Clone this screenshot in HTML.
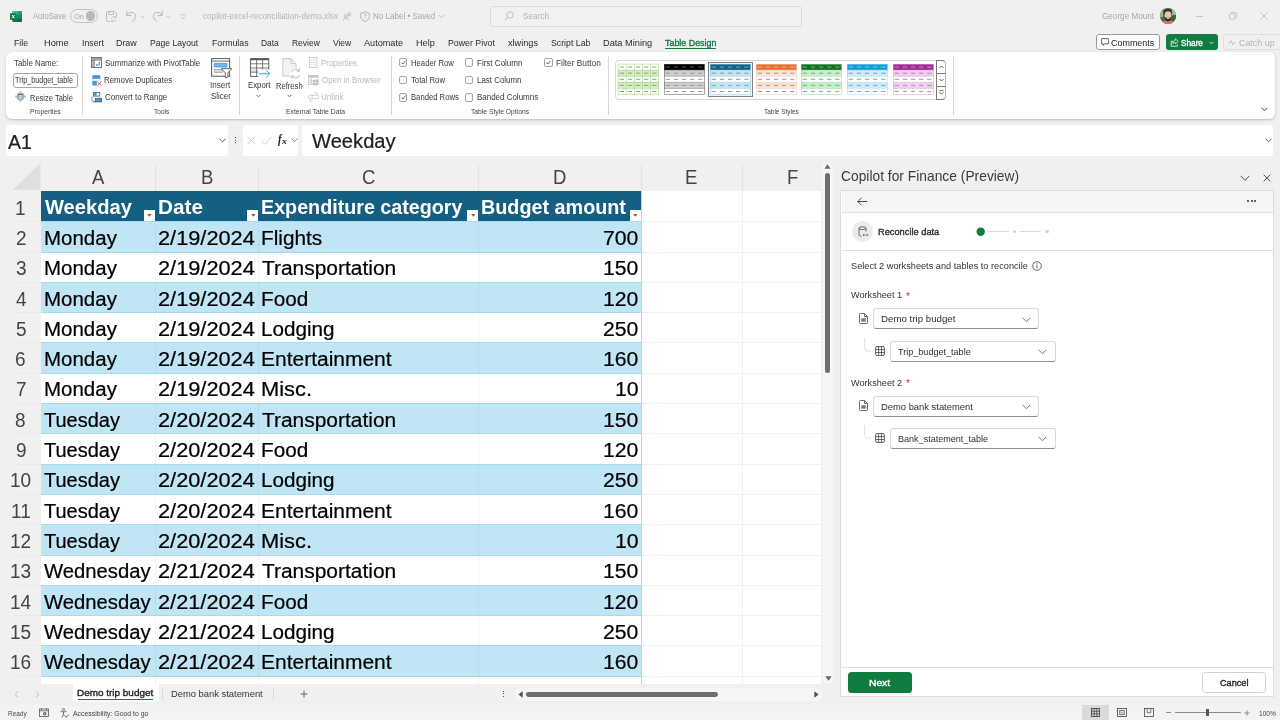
<!DOCTYPE html>
<html lang="en"><head><meta charset="utf-8"><title>copilot-excel-reconciliation-demo.xlsx - Excel</title>
<style>
html,body{margin:0;padding:0}
body{width:1280px;height:720px;overflow:hidden;background:#f0f0f0;position:relative;font-family:"Liberation Sans",sans-serif}
#root{position:absolute;left:0;top:0;width:1280px;height:720px;filter:contrast(1)}
.b{position:absolute;display:block}
.ct{-webkit-text-stroke:.22px currentColor}
.sb{-webkit-text-stroke:.35px currentColor}
.t{position:absolute;display:block;white-space:nowrap;line-height:1;transform-origin:0 0}
</style></head>
<body>
<div id="root">
<svg class="b" style="left:10px;top:10.5px;" width="12" height="11" viewBox="0 0 12 11"><rect x="2.5" y="0" width="9.5" height="11" rx="1" fill="#21a366"/>
<rect x="2.5" y="0" width="9.5" height="3.6" fill="#33c481" rx="1"/><rect x="2.5" y="7.4" width="9.5" height="3.6" fill="#107c41" rx="1"/>
<rect x="7.2" y="0" width="4.8" height="11" fill="#185c37" opacity=".35"/>
<rect x="0" y="2.3" width="6.6" height="6.6" rx=".8" fill="#107c41"/>
<path d="M2 4 L4.6 7.3 M4.6 4 L2 7.3" stroke="#fff" stroke-width="1" fill="none"/></svg>
<span class="t" style="left:32.70px;top:13.00px;font-size:8.2px;color:#a6a6a6;transform:scaleX(0.9352)">AutoSave</span>
<div class="b" style="left:69.7px;top:9.2px;width:28px;height:13.500px;border:1px solid #c2c2c2;border-radius:7px;box-sizing:border-box"></div>
<span class="t" style="left:73.87px;top:13.00px;font-size:7.2px;color:#a6a6a6;transform:scaleX(1.0317)">On</span>
<div class="b" style="left:86.3px;top:11.4px;width:9.2px;height:9.2px;background:#b8b8b8;border-radius:50%"></div>
<svg class="b" style="left:106px;top:11px;" width="11" height="11" viewBox="0 0 11 11"><path d="M.5 1.5a1 1 0 0 1 1-1h7l2 2v3M.5 1.5v8a1 1 0 0 0 1 1h2.5M2.8.5v3h4.8v-3" fill="none" stroke="#b9b9b9" stroke-width=".9"/><path d="M5.5 7.5a2.3 2.3 0 0 1 4.2-1M10 8.8a2.3 2.3 0 0 1-4.2 1M9.9 5v1.7H8.2M5.6 11V9.4h1.7" fill="none" stroke="#b9b9b9" stroke-width=".8"/></svg>
<svg class="b" style="left:125.5px;top:10px;" width="11" height="12" viewBox="0 0 11 12"><path d="M.8 1.2v4.2h4.2M1 5.2C2.5 2.6 5.5 1.6 7.8 3c2.2 1.4 2.5 4.2 1 6L6 11.5" fill="none" stroke="#b5b5b5" stroke-width="1" stroke-linecap="round" stroke-linejoin="round"/></svg>
<svg class="b" style="left:140px;top:14.5px;" width="5" height="4" viewBox="0 0 5 4"><path d="M.5 .8L2.5 2.8L4.5 .8" fill="none" stroke="#b5b5b5" stroke-width=".8"/></svg>
<svg class="b" style="left:152px;top:10px;" width="11" height="12" viewBox="0 0 11 12"><path d="M10.2 1.2v4.2H6M10 5.2C8.5 2.6 5.5 1.6 3.2 3C1 4.400.7 7.200 2.200 9L5 11.500" fill="none" stroke="#b5b5b5" stroke-width="1" stroke-linecap="round" stroke-linejoin="round"/></svg>
<svg class="b" style="left:166px;top:14.5px;" width="5" height="4" viewBox="0 0 5 4"><path d="M.5 .8L2.5 2.8L4.5 .8" fill="none" stroke="#b5b5b5" stroke-width=".8"/></svg>
<svg class="b" style="left:179.5px;top:13.5px;" width="6" height="6" viewBox="0 0 6 6"><path d="M.5 .8h5" stroke="#b5b5b5" stroke-width=".8"/><path d="M1 2.800L3 4.800L5 2.800" fill="none" stroke="#b5b5b5" stroke-width=".8"/></svg>
<span class="t" style="left:202.57px;top:13.00px;font-size:8.2px;color:#b4b4b4;transform:scaleX(0.9969)">copilot-excel-reconciliation-demo.xlsx</span>
<svg class="b" style="left:343px;top:12px;" width="8" height="9" viewBox="0 0 8 9"><circle cx="3" cy="4" r="1.500" fill="none" stroke="#a8a8a8" stroke-width=".7"/><path d="M.4 8.500c0-1.600 1.200-2.400 2.600-2.400s2.600.8 2.600 2.400" fill="none" stroke="#a8a8a8" stroke-width=".7"/><path d="M5.600 .8v3.600M5.600 .8h1.200a.9.900 0 0 1 0 1.800h-1.200M6.600 2.600l1 1.800" fill="none" stroke="#a8a8a8" stroke-width=".6"/></svg>
<svg class="b" style="left:359.5px;top:11px;" width="10" height="11" viewBox="0 0 10 11"><path d="M5 .6C6.200 1.600 7.800 2 9.300 2v3.500c0 2.500-1.800 4.200-4.300 5C2.500 9.700.7 8 .7 5.500V2C2.200 2 3.800 1.600 5 .6z" fill="none" stroke="#a8a8a8" stroke-width=".8"/><path d="M3.800 4.200a1.200 1.200 0 1 1 1.800 1c-.4.300-.6.500-.6 1M5 7.400v.6" fill="none" stroke="#a8a8a8" stroke-width=".7"/></svg>
<span class="t" style="left:372.56px;top:13.00px;font-size:8.2px;color:#a6a6a6;transform:scaleX(0.9820)">No Label • Saved</span>
<svg class="b" style="left:437.5px;top:14px;" width="7" height="5" viewBox="0 0 7 5"><path d="M.5 .8L3.500 3.800L6.500 .8" fill="none" stroke="#b0b0b0" stroke-width=".8"/></svg>
<div class="b" style="left:489.5px;top:5.5px;width:312px;height:21px;border:1px solid #dcdcdc;border-radius:3px;box-sizing:border-box;background:#f1f1f1"></div>
<svg class="b" style="left:504px;top:11px;" width="10" height="10" viewBox="0 0 10 10"><circle cx="6" cy="4" r="3.200" fill="none" stroke="#b0b0b0" stroke-width=".8"/><path d="M3.700 6.300L.6 9.400" stroke="#b0b0b0" stroke-width=".8"/></svg>
<span class="t" style="left:522.83px;top:13.00px;font-size:8.2px;color:#b2b2b2;transform:scaleX(1.0059)">Search</span>
<span class="t" style="left:1102.29px;top:13.00px;font-size:8.2px;color:#a6a6a6;transform:scaleX(0.9952)">George Mount</span>
<svg class="b" style="left:1160px;top:8px;" width="16" height="16" viewBox="0 0 16 16"><defs><clipPath id="av"><circle cx="8" cy="8" r="8"/></clipPath></defs>
<g clip-path="url(#av)"><rect width="16" height="16" fill="#3e7040"/><rect x="0" y="3" width="3" height="6" fill="#a9b86a"/><rect x="11.500" y="2" width="5" height="5" fill="#9fc0a8"/><rect x="11" y="7" width="5" height="6" fill="#2f6a33"/>
<ellipse cx="8" cy="5" rx="4.300" ry="4" fill="#3b2c25"/><ellipse cx="8" cy="7.400" rx="3.500" ry="4.200" fill="#e6c3ae"/>
<path d="M4.400 8.300c.2 3.600 1.900 4.900 3.600 4.900s3.400-1.300 3.600-4.900c-.8 1.300-1.600 1.700-2.200 1.500-.9-.4-1.900-.4-2.800 0-.6.200-1.400-.2-2.200-1.500z" fill="#33241d"/>
<ellipse cx="8" cy="10.200" rx="1.500" ry=".7" fill="#f4e6dc"/>
<path d="M1.500 16c.5-2.800 2.500-3.400 4-3.600l2.500 1.400 2.500-1.400c1.500.2 3.500.8 4 3.600z" fill="#f26b57"/></g></svg>
<div class="b" style="left:1196px;top:15.5px;width:7px;height:0.8px;background:#c4c4c4"></div>
<svg class="b" style="left:1228.5px;top:12px;" width="8" height="8" viewBox="0 0 8 8"><rect x=".5" y="1.900" width="5.400" height="5.400" rx="1" fill="none" stroke="#bdbdbd" stroke-width=".8"/><path d="M2 1.900V1.500a1 1 0 0 1 1-1h3.500a1 1 0 0 1 1 1v3.500a1 1 0 0 1-1 1h-.4" fill="none" stroke="#bdbdbd" stroke-width=".8"/></svg>
<svg class="b" style="left:1260px;top:12px;" width="8" height="8" viewBox="0 0 8 8"><path d="M.5 .5l7 7M7.500 .5l-7 7" stroke="#bdbdbd" stroke-width=".8"/></svg>
<span class="t" style="left:13.90px;top:38.00px;font-size:9.5px;color:#2b2b2b;transform:scaleX(0.9215)">File</span>
<span class="t" style="left:44.06px;top:38.00px;font-size:9.5px;color:#2b2b2b;transform:scaleX(0.9697)">Home</span>
<span class="t" style="left:81.51px;top:38.00px;font-size:9.5px;color:#2b2b2b;transform:scaleX(0.9191)">Insert</span>
<span class="t" style="left:116.09px;top:38.00px;font-size:9.5px;color:#2b2b2b;transform:scaleX(0.9336)">Draw</span>
<span class="t" style="left:150.11px;top:38.00px;font-size:9.5px;color:#2b2b2b;transform:scaleX(0.9023)">Page Layout</span>
<span class="t" style="left:211.50px;top:38.00px;font-size:9.5px;color:#2b2b2b;transform:scaleX(0.9241)">Formulas</span>
<span class="t" style="left:261.03px;top:38.00px;font-size:9.5px;color:#2b2b2b;transform:scaleX(0.8867)">Data</span>
<span class="t" style="left:292.02px;top:38.00px;font-size:9.5px;color:#2b2b2b;transform:scaleX(0.8914)">Review</span>
<span class="t" style="left:332.66px;top:38.00px;font-size:9.5px;color:#2b2b2b;transform:scaleX(0.8882)">View</span>
<span class="t" style="left:364.20px;top:38.00px;font-size:9.5px;color:#2b2b2b;transform:scaleX(0.9594)">Automate</span>
<span class="t" style="left:415.97px;top:38.00px;font-size:9.5px;color:#2b2b2b;transform:scaleX(0.9574)">Help</span>
<span class="t" style="left:447.50px;top:38.00px;font-size:9.5px;color:#2b2b2b;transform:scaleX(0.9243)">Power Pivot</span>
<span class="t" style="left:508.11px;top:38.00px;font-size:9.5px;color:#2b2b2b;transform:scaleX(0.9631)">xlwings</span>
<span class="t" style="left:550.81px;top:38.00px;font-size:9.5px;color:#2b2b2b;transform:scaleX(0.9203)">Script Lab</span>
<span class="t" style="left:603.16px;top:38.00px;font-size:9.5px;color:#2b2b2b;transform:scaleX(0.9715)">Data Mining</span>
<span class="t sb" style="left:665.02px;top:38.00px;font-size:9.5px;color:#107c41;transform:scaleX(0.9353)">Table Design</span>
<div class="b" style="left:665px;top:47.6px;width:51px;height:1.6px;background:#107c41;border-radius:1px"></div>
<div class="b" style="left:1095.5px;top:34.3px;width:64px;height:15.400px;border:1px solid #999;border-radius:3px;box-sizing:border-box;background:#fff"></div>
<svg class="b" style="left:1101px;top:38px;" width="8" height="8" viewBox="0 0 8 8"><path d="M1 .6h6a.6.600 0 0 1 .6.600v4a.6.600 0 0 1-.6.600H3.800L2 7.400V5.800H1a.6.600 0 0 1-.6-.6v-4A.6.600 0 0 1 1 .6z" fill="none" stroke="#333" stroke-width=".8"/></svg>
<span class="t" style="left:1111.05px;top:39.00px;font-size:9.2px;color:#222;transform:scaleX(0.9748)">Comments</span>
<div class="b" style="left:1165.5px;top:34.3px;width:52px;height:15.400px;border-radius:3px;background:#107c41"></div>
<svg class="b" style="left:1170px;top:37.5px;" width="9" height="9" viewBox="0 0 9 9"><path d="M3 3.200H1.200v5h6.200V6.500" fill="none" stroke="#fff" stroke-width=".8"/><path d="M5.300 .8L8.200 3.300L5.300 5.800V4.300C3.900 4.300 3.200 4.900 2.700 5.800C2.800 3.800 3.700 2.500 5.300 2.300z" fill="none" stroke="#fff" stroke-width=".7" stroke-linejoin="round"/></svg>
<span class="t sb" style="left:1181.23px;top:39.00px;font-size:9.2px;color:#fff;transform:scaleX(0.8949)">Share</span>
<svg class="b" style="left:1209px;top:40.5px;" width="5" height="4" viewBox="0 0 5 4"><path d="M.5 .8L2.500 2.800L4.500 .8" fill="none" stroke="#fff" stroke-width=".8"/></svg>
<div class="b" style="left:1223px;top:34.3px;width:60px;height:15.400px;border:1px solid #dedede;border-radius:3px;box-sizing:border-box"></div>
<svg class="b" style="left:1228px;top:38.5px;" width="8" height="7" viewBox="0 0 8 7"><path d="M.4 3.800h1.600l1.200-2.400 1.600 4.200 1.100-1.800h1.700" fill="none" stroke="#b5b5b5" stroke-width=".7"/></svg>
<span class="t" style="left:1238.75px;top:39.00px;font-size:9.2px;color:#b3b3b3;transform:scaleX(0.9674)">Catch up</span>
<div class="b" style="left:5.5px;top:51.5px;width:1269.5px;height:67px;background:#fff;border-radius:6px;box-shadow:0 1px 2.500px rgba(0,0,0,.22)"></div>
<span class="t" style="left:13.94px;top:59.00px;font-size:8.5px;color:#383838;transform:scaleX(0.9262)">Table Name:</span>
<div class="b" style="left:13px;top:72.500px;width:64.500px;height:15px;border:1px solid #a6a6a6;border-radius:3px;box-sizing:border-box;background:#fff"></div>
<span class="t" style="left:15.46px;top:77.00px;font-size:8.2px;color:#383838;transform:scaleX(0.8825)">Trip_budget_table</span>
<svg class="b" style="left:15.4px;top:91.1px;" width="11" height="11" viewBox="0 0 11 11"><rect x="2.500" y="2.500" width="6" height="6" fill="#6a6a6a"/><rect x="3.400" y="4.300" width="4.200" height="1.300" fill="#fff"/><rect x="3.400" y="6.300" width="4.200" height="1.300" fill="#fff"/><rect x="4.500" y=".3" width="2" height="2" fill="#7cc0ee"/><rect x="4.500" y="8.700" width="2" height="2" fill="#7cc0ee"/><rect x=".2" y="4.500" width="2" height="2" fill="#7cc0ee"/><rect x="8.800" y="4.500" width="2" height="2" fill="#7cc0ee"/></svg>
<span class="t" style="left:29.70px;top:94.00px;font-size:8.5px;color:#383838;transform:scaleX(0.8834)">Resize Table</span>
<span class="t" style="left:30.06px;top:108.00px;font-size:7.4px;color:#444;transform:scaleX(0.9120)">Properties</span>
<div class="b" style="left:82.3px;top:55.6px;width:0.8px;height:59px;background:#d8d8d8"></div>
<svg class="b" style="left:91px;top:57px;" width="11" height="11" viewBox="0 0 11 11"><rect x=".5" y=".5" width="10" height="10" fill="#fff" stroke="#666" stroke-width=".9"/><rect x="1" y="1" width="9" height="2" fill="#a8a8a8"/><rect x="1" y="1" width="2.200" height="9" fill="#b5b5b5"/><path d="M3.400 .8v9.400M.8 3.300h9.400" stroke="#666" stroke-width=".6"/><path d="M5.400 8h3V5.200" fill="none" stroke="#2b88d8" stroke-width=".9"/><path d="M7.300 5.600l1.100-1.200 1.100 1.200zM6 6.900L4.800 8 6 9.100z" fill="#2b88d8"/></svg>
<span class="t" style="left:104.74px;top:59.00px;font-size:8.5px;color:#383838;transform:scaleX(0.9331)">Summarize with PivotTable</span>
<svg class="b" style="left:92px;top:74.5px;" width="10" height="11" viewBox="0 0 10 11"><rect x=".3" y=".3" width="8" height="10.200" rx=".8" fill="#3a96dd"/><rect x=".3" y="3.400" width="8" height="2.800" fill="#fff"/><path d="M.3 3.400h8M.3 6.200h8" stroke="#1f6fb5" stroke-width=".5"/><rect x="4.800" y="5.800" width="5.200" height="5.200" fill="#fff"/><path d="M5.400 6.600l4 4M9.400 6.600l-4 4" stroke="#e8453c" stroke-width="1"/></svg>
<span class="t" style="left:104.47px;top:76.00px;font-size:8.5px;color:#383838;transform:scaleX(0.9255)">Remove Duplicates</span>
<svg class="b" style="left:91px;top:92px;" width="11" height="11" viewBox="0 0 11 11"><rect x="2.400" y=".5" width="6.400" height="3.600" fill="#fff" stroke="#555" stroke-width=".8"/><rect x="2.800" y=".9" width="2.800" height="2.800" fill="#3a96dd"/><rect x="4.400" y="6.300" width="6.200" height="3.600" fill="#3a96dd" stroke="#555" stroke-width=".8"/><path d="M3.600 9.800C1.500 9.600.3 8 .8 6.200 1.100 5 2 4.400 2.800 4.300M2.600 8.600l1.200 1.200-1.200 1.200" fill="none" stroke="#2b88d8" stroke-width=".9"/></svg>
<span class="t" style="left:104.70px;top:93.00px;font-size:8.5px;color:#383838;transform:scaleX(0.9348)">Convert to Range</span>
<span class="t" style="left:154.27px;top:108.00px;font-size:7.4px;color:#444;transform:scaleX(0.8890)">Tools</span>
<svg class="b" style="left:211px;top:57.5px;" width="22" height="21" viewBox="0 0 22 21"><rect x=".6" y=".6" width="18" height="17.600" fill="#fff" stroke="#5a5a5a" stroke-width="1"/><path d="M.6 3.100h18" stroke="#5a5a5a" stroke-width=".9"/><rect x="3.200" y="5.400" width="12.800" height="3.600" rx=".5" fill="#74b6ee" stroke="#2b88d8" stroke-width=".7"/><rect x="3.200" y="11.300" width="8" height="3" fill="#d6d6d6" stroke="#8a8a8a" stroke-width=".6"/><path d="M10.400 10.600h10.400l-3.900 4.300v4l-2.600 1v-5z" fill="#fff" stroke="#5a5a5a" stroke-width=".9" stroke-linejoin="round"/></svg>
<span class="t" style="left:210.47px;top:81.00px;font-size:8.5px;color:#383838;transform:scaleX(0.9490)">Insert</span>
<span class="t" style="left:210.84px;top:92.00px;font-size:8.5px;color:#383838;transform:scaleX(0.9354)">Slicer</span>
<div class="b" style="left:239.2px;top:55.6px;width:0.8px;height:59px;background:#d8d8d8"></div>
<svg class="b" style="left:250px;top:57.5px;" width="21" height="21" viewBox="0 0 21 21"><rect x=".6" y=".6" width="18.200" height="17.800" fill="#fff" stroke="#555" stroke-width=".9"/><path d="M.6 1.500h18.200" stroke="#555" stroke-width="1.400"/><rect x="1" y="11.500" width="17.400" height="2.200" fill="#dedede"/><path d="M.6 5.800h18.200M.6 10h18.200M.6 14.200h18.200M6.600 2v16.400M12.600 2v16.400" stroke="#555" stroke-width=".75"/><rect x="8.300" y="11.600" width="12.700" height="8" fill="#fff"/><path d="M8.800 15.800h10.600M16.200 12.200l3.600 3.600-3.600 3.600" fill="none" stroke="#3a9ee6" stroke-width="1"/></svg>
<span class="t" style="left:248.18px;top:81.00px;font-size:8.5px;color:#383838;transform:scaleX(0.9160)">Export</span>
<svg class="b" style="left:256px;top:93.5px;" width="5" height="4" viewBox="0 0 5 4"><path d="M.5 .8L2.500 2.800L4.500 .8" fill="none" stroke="#444" stroke-width=".8"/></svg>
<svg class="b" style="left:281.5px;top:57.5px;" width="20" height="21" viewBox="0 0 20 21"><path d="M.8 .6h8.200l5 5v12.500H.8z" fill="#f3f3f3" stroke="#c6c6c6" stroke-width=".9"/><path d="M9 .6v5h5" fill="none" stroke="#c6c6c6" stroke-width=".9"/><circle cx="13.500" cy="15.600" r="5.600" fill="#fff"/><path d="M9.400 14.200a4.300 4.300 0 0 1 7.600-1.300M17.600 17a4.300 4.300 0 0 1-7.600 1.300" fill="none" stroke="#bdbdbd" stroke-width="1"/><path d="M17.400 10.400v2.800h-2.800M9.600 20.800V18h2.800" fill="none" stroke="#bdbdbd" stroke-width="1"/></svg>
<span class="t" style="left:276.29px;top:82.00px;font-size:8.5px;color:#383838;transform:scaleX(0.8942)">Refresh</span>
<svg class="b" style="left:286.5px;top:94px;" width="5" height="4" viewBox="0 0 5 4"><path d="M.5 .8L2.500 2.800L4.500 .8" fill="none" stroke="#444" stroke-width=".8"/></svg>
<svg class="b" style="left:309px;top:56.7px;" width="9" height="11" viewBox="0 0 9 11"><rect x=".5" y=".5" width="7.500" height="10" fill="#fff" stroke="#c2c2c2" stroke-width=".8"/><path d="M2 3h1.200M4.200 3h2.300M2 5.500h1.200M4.200 5.500h2.300M2 8h1.200M4.200 8h2.300" stroke="#c2c2c2" stroke-width=".8"/></svg>
<span class="t" style="left:321.47px;top:59.00px;font-size:8.5px;color:#bababa;transform:scaleX(0.9290)">Properties</span>
<svg class="b" style="left:307.8px;top:74.5px;" width="11" height="11" viewBox="0 0 11 11"><rect x=".5" y=".5" width="9.500" height="9" fill="#fff" stroke="#c2c2c2" stroke-width=".8"/><rect x=".5" y=".5" width="9.500" height="2.200" fill="#c8c8c8"/><path d="M.5 5h4M.5 7.300h3.500M3.300 2.700v6.800" stroke="#c2c2c2" stroke-width=".7"/><circle cx="7.600" cy="7.600" r="3" fill="#bbb"/><path d="M4.600 7.600h6M7.600 4.600v6" stroke="#fff" stroke-width=".5"/></svg>
<span class="t" style="left:321.74px;top:76.00px;font-size:8.5px;color:#bababa;transform:scaleX(0.9319)">Open in Browser</span>
<svg class="b" style="left:307.8px;top:91.2px;" width="11" height="12" viewBox="0 0 11 12"><rect x=".5" y="4.200" width="6" height="3.500" rx="1.700" fill="none" stroke="#c2c2c2" stroke-width=".8"/><rect x="4" y="4.200" width="6.500" height="3.500" rx="1.700" fill="#fff" stroke="#c2c2c2" stroke-width=".8"/><path d="M6.800 .5l.4 2M9.200 1.200l-1 1.800M10.800 3l-1.700 1M2.300 8.500l-.6 2.500M3.800 8.800v2" stroke="#c2c2c2" stroke-width=".7"/></svg>
<span class="t" style="left:321.49px;top:93.00px;font-size:8.5px;color:#bababa;transform:scaleX(0.9525)">Unlink</span>
<span class="t" style="left:285.86px;top:108.00px;font-size:7.4px;color:#444;transform:scaleX(0.9176)">External Table Data</span>
<div class="b" style="left:390.5px;top:55.6px;width:0.8px;height:59px;background:#d8d8d8"></div>
<div class="b" style="left:398.5px;top:58.3px;width:8.700px;height:8.700px;border:1px solid #a3a3a3;border-radius:2px;box-sizing:border-box;background:#fff"></div>
<svg class="b" style="left:398.5px;top:58.3px;" width="9" height="9" viewBox="0 0 9 9"><path d="M2.300 4.500L3.800 6L6.600 2.800" fill="none" stroke="#333" stroke-width=".8"/></svg>
<span class="t" style="left:410.58px;top:59.00px;font-size:8.5px;color:#383838;transform:scaleX(0.9060)">Header Row</span>
<div class="b" style="left:398.5px;top:75.6px;width:8.700px;height:8.700px;border:1px solid #a3a3a3;border-radius:2px;box-sizing:border-box;background:#fff"></div>
<span class="t" style="left:410.85px;top:76.00px;font-size:8.5px;color:#383838;transform:scaleX(0.9116)">Total Row</span>
<div class="b" style="left:398.5px;top:93px;width:8.700px;height:8.700px;border:1px solid #a3a3a3;border-radius:2px;box-sizing:border-box;background:#fff"></div>
<svg class="b" style="left:398.5px;top:93px;" width="9" height="9" viewBox="0 0 9 9"><path d="M2.300 4.500L3.800 6L6.600 2.800" fill="none" stroke="#333" stroke-width=".8"/></svg>
<span class="t" style="left:410.59px;top:93.00px;font-size:8.5px;color:#383838;transform:scaleX(0.9031)">Banded Rows</span>
<div class="b" style="left:464.7px;top:58.3px;width:8.700px;height:8.700px;border:1px solid #a3a3a3;border-radius:2px;box-sizing:border-box;background:#fff"></div>
<span class="t" style="left:476.56px;top:59.00px;font-size:8.5px;color:#383838;transform:scaleX(0.9442)">First Column</span>
<div class="b" style="left:464.7px;top:75.6px;width:8.700px;height:8.700px;border:1px solid #a3a3a3;border-radius:2px;box-sizing:border-box;background:#fff"></div>
<span class="t" style="left:476.57px;top:76.00px;font-size:8.5px;color:#383838;transform:scaleX(0.9313)">Last Column</span>
<div class="b" style="left:464.7px;top:93px;width:8.700px;height:8.700px;border:1px solid #a3a3a3;border-radius:2px;box-sizing:border-box;background:#fff"></div>
<span class="t" style="left:476.56px;top:93.00px;font-size:8.5px;color:#383838;transform:scaleX(0.9374)">Banded Columns</span>
<div class="b" style="left:544.2px;top:58.3px;width:8.700px;height:8.700px;border:1px solid #a3a3a3;border-radius:2px;box-sizing:border-box;background:#fff"></div>
<svg class="b" style="left:544.2px;top:58.3px;" width="9" height="9" viewBox="0 0 9 9"><path d="M2.300 4.500L3.800 6L6.600 2.800" fill="none" stroke="#333" stroke-width=".8"/></svg>
<span class="t" style="left:555.93px;top:59.00px;font-size:8.5px;color:#383838;transform:scaleX(0.9780)">Filter Button</span>
<span class="t" style="left:471.06px;top:108.00px;font-size:7.4px;color:#444;transform:scaleX(0.9125)">Table Style Options</span>
<div class="b" style="left:608.3px;top:55.6px;width:0.8px;height:59px;background:#d8d8d8"></div>
<div class="b" style="left:614.500px;top:60px;width:331.500px;height:39.800px;border:1px solid #d6d6d6;border-radius:4px;box-sizing:border-box;background:#fff"></div>
<svg class="b" style="left:618.4px;top:64.4px;overflow:visible" width="40.6" height="30.6" viewBox="0 0 40.6 30.6"><rect x="0" y="0.00" width="40.6" height="6.12" fill="#fff"/><rect x="0" y="6.12" width="40.6" height="6.12" fill="#d3efc0"/><rect x="0" y="12.24" width="40.6" height="6.12" fill="#fff"/><rect x="0" y="18.36" width="40.6" height="6.12" fill="#d3efc0"/><rect x="0" y="24.48" width="40.6" height="6.12" fill="#fff"/><path d="M0 0.15h40.6" stroke="#8fd16a" stroke-width=".5"/><path d="M0.15 0v30.6" stroke="#8fd16a" stroke-width=".5"/><path d="M0 6.27h40.6" stroke="#8fd16a" stroke-width=".5"/><path d="M8.27 0v30.6" stroke="#8fd16a" stroke-width=".5"/><path d="M0 12.39h40.6" stroke="#8fd16a" stroke-width=".5"/><path d="M16.39 0v30.6" stroke="#8fd16a" stroke-width=".5"/><path d="M0 18.51h40.6" stroke="#8fd16a" stroke-width=".5"/><path d="M24.51 0v30.6" stroke="#8fd16a" stroke-width=".5"/><path d="M0 24.63h40.6" stroke="#8fd16a" stroke-width=".5"/><path d="M32.63 0v30.6" stroke="#8fd16a" stroke-width=".5"/><path d="M0 30.45h40.6" stroke="#8fd16a" stroke-width=".5"/><path d="M40.45 0v30.6" stroke="#8fd16a" stroke-width=".5"/><rect x="1.70" y="2.56" width="4.32" height="1" fill="#9a9a9a"/><rect x="9.82" y="2.56" width="4.32" height="1" fill="#9a9a9a"/><rect x="17.94" y="2.56" width="4.32" height="1" fill="#9a9a9a"/><rect x="26.06" y="2.56" width="4.32" height="1" fill="#9a9a9a"/><rect x="34.18" y="2.56" width="4.32" height="1" fill="#9a9a9a"/><rect x="1.70" y="8.68" width="4.32" height="1" fill="#9a9a9a"/><rect x="9.82" y="8.68" width="4.32" height="1" fill="#9a9a9a"/><rect x="17.94" y="8.68" width="4.32" height="1" fill="#9a9a9a"/><rect x="26.06" y="8.68" width="4.32" height="1" fill="#9a9a9a"/><rect x="34.18" y="8.68" width="4.32" height="1" fill="#9a9a9a"/><rect x="1.70" y="14.80" width="4.32" height="1" fill="#9a9a9a"/><rect x="9.82" y="14.80" width="4.32" height="1" fill="#9a9a9a"/><rect x="17.94" y="14.80" width="4.32" height="1" fill="#9a9a9a"/><rect x="26.06" y="14.80" width="4.32" height="1" fill="#9a9a9a"/><rect x="34.18" y="14.80" width="4.32" height="1" fill="#9a9a9a"/><rect x="1.70" y="20.92" width="4.32" height="1" fill="#9a9a9a"/><rect x="9.82" y="20.92" width="4.32" height="1" fill="#9a9a9a"/><rect x="17.94" y="20.92" width="4.32" height="1" fill="#9a9a9a"/><rect x="26.06" y="20.92" width="4.32" height="1" fill="#9a9a9a"/><rect x="34.18" y="20.92" width="4.32" height="1" fill="#9a9a9a"/><rect x="1.70" y="27.04" width="4.32" height="1" fill="#9a9a9a"/><rect x="9.82" y="27.04" width="4.32" height="1" fill="#9a9a9a"/><rect x="17.94" y="27.04" width="4.32" height="1" fill="#9a9a9a"/><rect x="26.06" y="27.04" width="4.32" height="1" fill="#9a9a9a"/><rect x="34.18" y="27.04" width="4.32" height="1" fill="#9a9a9a"/></svg>
<svg class="b" style="left:664px;top:64.4px;overflow:visible" width="40.6" height="30.6" viewBox="0 0 40.6 30.6"><rect x="0" y="0.00" width="40.6" height="6.12" fill="#000"/><rect x="0" y="6.12" width="40.6" height="6.12" fill="#cfcfcf"/><rect x="0" y="12.24" width="40.6" height="6.12" fill="#fff"/><rect x="0" y="18.36" width="40.6" height="6.12" fill="#cfcfcf"/><rect x="0" y="24.48" width="40.6" height="6.12" fill="#fff"/><path d="M0 6.12h40.6" stroke="#777" stroke-width=".5"/><path d="M0 12.24h40.6" stroke="#777" stroke-width=".5"/><path d="M0 18.36h40.6" stroke="#777" stroke-width=".5"/><path d="M0 24.48h40.6" stroke="#777" stroke-width=".5"/><rect x=".25" y=".25" width="40.1" height="30.1" fill="none" stroke="#555" stroke-width=".5"/><rect x="1.70" y="2.56" width="4.32" height="1" fill="#555"/><rect x="9.82" y="2.56" width="4.32" height="1" fill="#555"/><rect x="17.94" y="2.56" width="4.32" height="1" fill="#555"/><rect x="26.06" y="2.56" width="4.32" height="1" fill="#555"/><rect x="34.18" y="2.56" width="4.32" height="1" fill="#555"/><rect x="1.70" y="8.68" width="4.32" height="1" fill="#9a9a9a"/><rect x="9.82" y="8.68" width="4.32" height="1" fill="#9a9a9a"/><rect x="17.94" y="8.68" width="4.32" height="1" fill="#9a9a9a"/><rect x="26.06" y="8.68" width="4.32" height="1" fill="#9a9a9a"/><rect x="34.18" y="8.68" width="4.32" height="1" fill="#9a9a9a"/><rect x="1.70" y="14.80" width="4.32" height="1" fill="#9a9a9a"/><rect x="9.82" y="14.80" width="4.32" height="1" fill="#9a9a9a"/><rect x="17.94" y="14.80" width="4.32" height="1" fill="#9a9a9a"/><rect x="26.06" y="14.80" width="4.32" height="1" fill="#9a9a9a"/><rect x="34.18" y="14.80" width="4.32" height="1" fill="#9a9a9a"/><rect x="1.70" y="20.92" width="4.32" height="1" fill="#9a9a9a"/><rect x="9.82" y="20.92" width="4.32" height="1" fill="#9a9a9a"/><rect x="17.94" y="20.92" width="4.32" height="1" fill="#9a9a9a"/><rect x="26.06" y="20.92" width="4.32" height="1" fill="#9a9a9a"/><rect x="34.18" y="20.92" width="4.32" height="1" fill="#9a9a9a"/><rect x="1.70" y="27.04" width="4.32" height="1" fill="#9a9a9a"/><rect x="9.82" y="27.04" width="4.32" height="1" fill="#9a9a9a"/><rect x="17.94" y="27.04" width="4.32" height="1" fill="#9a9a9a"/><rect x="26.06" y="27.04" width="4.32" height="1" fill="#9a9a9a"/><rect x="34.18" y="27.04" width="4.32" height="1" fill="#9a9a9a"/></svg>
<div class="b" style="left:707.500px;top:62.300px;width:45.200px;height:35.200px;border:1px solid #808080;box-sizing:border-box;background:#f0f0f0"></div>
<svg class="b" style="left:710.1px;top:64.4px;overflow:visible" width="40.6" height="30.6" viewBox="0 0 40.6 30.6"><rect x="0" y="0.00" width="40.6" height="6.12" fill="#156082"/><rect x="0" y="6.12" width="40.6" height="6.12" fill="#c0e6f5"/><rect x="0" y="12.24" width="40.6" height="6.12" fill="#fff"/><rect x="0" y="18.36" width="40.6" height="6.12" fill="#c0e6f5"/><rect x="0" y="24.48" width="40.6" height="6.12" fill="#fff"/><path d="M0 6.12h40.6" stroke="#8fd0ea" stroke-width=".5"/><path d="M0 12.24h40.6" stroke="#8fd0ea" stroke-width=".5"/><path d="M0 18.36h40.6" stroke="#8fd0ea" stroke-width=".5"/><path d="M0 24.48h40.6" stroke="#8fd0ea" stroke-width=".5"/><rect x=".25" y=".25" width="40.1" height="30.1" fill="none" stroke="#8fd0ea" stroke-width=".5"/><rect x="1.70" y="2.56" width="4.32" height="1" fill="rgba(255,255,255,.45)"/><rect x="9.82" y="2.56" width="4.32" height="1" fill="rgba(255,255,255,.45)"/><rect x="17.94" y="2.56" width="4.32" height="1" fill="rgba(255,255,255,.45)"/><rect x="26.06" y="2.56" width="4.32" height="1" fill="rgba(255,255,255,.45)"/><rect x="34.18" y="2.56" width="4.32" height="1" fill="rgba(255,255,255,.45)"/><rect x="1.70" y="8.68" width="4.32" height="1" fill="#9a9a9a"/><rect x="9.82" y="8.68" width="4.32" height="1" fill="#9a9a9a"/><rect x="17.94" y="8.68" width="4.32" height="1" fill="#9a9a9a"/><rect x="26.06" y="8.68" width="4.32" height="1" fill="#9a9a9a"/><rect x="34.18" y="8.68" width="4.32" height="1" fill="#9a9a9a"/><rect x="1.70" y="14.80" width="4.32" height="1" fill="#9a9a9a"/><rect x="9.82" y="14.80" width="4.32" height="1" fill="#9a9a9a"/><rect x="17.94" y="14.80" width="4.32" height="1" fill="#9a9a9a"/><rect x="26.06" y="14.80" width="4.32" height="1" fill="#9a9a9a"/><rect x="34.18" y="14.80" width="4.32" height="1" fill="#9a9a9a"/><rect x="1.70" y="20.92" width="4.32" height="1" fill="#9a9a9a"/><rect x="9.82" y="20.92" width="4.32" height="1" fill="#9a9a9a"/><rect x="17.94" y="20.92" width="4.32" height="1" fill="#9a9a9a"/><rect x="26.06" y="20.92" width="4.32" height="1" fill="#9a9a9a"/><rect x="34.18" y="20.92" width="4.32" height="1" fill="#9a9a9a"/><rect x="1.70" y="27.04" width="4.32" height="1" fill="#9a9a9a"/><rect x="9.82" y="27.04" width="4.32" height="1" fill="#9a9a9a"/><rect x="17.94" y="27.04" width="4.32" height="1" fill="#9a9a9a"/><rect x="26.06" y="27.04" width="4.32" height="1" fill="#9a9a9a"/><rect x="34.18" y="27.04" width="4.32" height="1" fill="#9a9a9a"/></svg>
<svg class="b" style="left:755.6px;top:64.4px;overflow:visible" width="40.6" height="30.6" viewBox="0 0 40.6 30.6"><rect x="0" y="0.00" width="40.6" height="6.12" fill="#e97132"/><rect x="0" y="6.12" width="40.6" height="6.12" fill="#fbe3d6"/><rect x="0" y="12.24" width="40.6" height="6.12" fill="#fff"/><rect x="0" y="18.36" width="40.6" height="6.12" fill="#fbe3d6"/><rect x="0" y="24.48" width="40.6" height="6.12" fill="#fff"/><path d="M0 6.12h40.6" stroke="#f6c6ad" stroke-width=".5"/><path d="M0 12.24h40.6" stroke="#f6c6ad" stroke-width=".5"/><path d="M0 18.36h40.6" stroke="#f6c6ad" stroke-width=".5"/><path d="M0 24.48h40.6" stroke="#f6c6ad" stroke-width=".5"/><rect x=".25" y=".25" width="40.1" height="30.1" fill="none" stroke="#f6c6ad" stroke-width=".5"/><rect x="1.70" y="2.56" width="4.32" height="1" fill="rgba(255,255,255,.45)"/><rect x="9.82" y="2.56" width="4.32" height="1" fill="rgba(255,255,255,.45)"/><rect x="17.94" y="2.56" width="4.32" height="1" fill="rgba(255,255,255,.45)"/><rect x="26.06" y="2.56" width="4.32" height="1" fill="rgba(255,255,255,.45)"/><rect x="34.18" y="2.56" width="4.32" height="1" fill="rgba(255,255,255,.45)"/><rect x="1.70" y="8.68" width="4.32" height="1" fill="#9a9a9a"/><rect x="9.82" y="8.68" width="4.32" height="1" fill="#9a9a9a"/><rect x="17.94" y="8.68" width="4.32" height="1" fill="#9a9a9a"/><rect x="26.06" y="8.68" width="4.32" height="1" fill="#9a9a9a"/><rect x="34.18" y="8.68" width="4.32" height="1" fill="#9a9a9a"/><rect x="1.70" y="14.80" width="4.32" height="1" fill="#9a9a9a"/><rect x="9.82" y="14.80" width="4.32" height="1" fill="#9a9a9a"/><rect x="17.94" y="14.80" width="4.32" height="1" fill="#9a9a9a"/><rect x="26.06" y="14.80" width="4.32" height="1" fill="#9a9a9a"/><rect x="34.18" y="14.80" width="4.32" height="1" fill="#9a9a9a"/><rect x="1.70" y="20.92" width="4.32" height="1" fill="#9a9a9a"/><rect x="9.82" y="20.92" width="4.32" height="1" fill="#9a9a9a"/><rect x="17.94" y="20.92" width="4.32" height="1" fill="#9a9a9a"/><rect x="26.06" y="20.92" width="4.32" height="1" fill="#9a9a9a"/><rect x="34.18" y="20.92" width="4.32" height="1" fill="#9a9a9a"/><rect x="1.70" y="27.04" width="4.32" height="1" fill="#9a9a9a"/><rect x="9.82" y="27.04" width="4.32" height="1" fill="#9a9a9a"/><rect x="17.94" y="27.04" width="4.32" height="1" fill="#9a9a9a"/><rect x="26.06" y="27.04" width="4.32" height="1" fill="#9a9a9a"/><rect x="34.18" y="27.04" width="4.32" height="1" fill="#9a9a9a"/></svg>
<svg class="b" style="left:801.2px;top:64.4px;overflow:visible" width="40.6" height="30.6" viewBox="0 0 40.6 30.6"><rect x="0" y="0.00" width="40.6" height="6.12" fill="#196b24"/><rect x="0" y="6.12" width="40.6" height="6.12" fill="#c2f1c8"/><rect x="0" y="12.24" width="40.6" height="6.12" fill="#fff"/><rect x="0" y="18.36" width="40.6" height="6.12" fill="#c2f1c8"/><rect x="0" y="24.48" width="40.6" height="6.12" fill="#fff"/><path d="M0 6.12h40.6" stroke="#84e291" stroke-width=".5"/><path d="M0 12.24h40.6" stroke="#84e291" stroke-width=".5"/><path d="M0 18.36h40.6" stroke="#84e291" stroke-width=".5"/><path d="M0 24.48h40.6" stroke="#84e291" stroke-width=".5"/><rect x=".25" y=".25" width="40.1" height="30.1" fill="none" stroke="#84e291" stroke-width=".5"/><rect x="1.70" y="2.56" width="4.32" height="1" fill="rgba(255,255,255,.45)"/><rect x="9.82" y="2.56" width="4.32" height="1" fill="rgba(255,255,255,.45)"/><rect x="17.94" y="2.56" width="4.32" height="1" fill="rgba(255,255,255,.45)"/><rect x="26.06" y="2.56" width="4.32" height="1" fill="rgba(255,255,255,.45)"/><rect x="34.18" y="2.56" width="4.32" height="1" fill="rgba(255,255,255,.45)"/><rect x="1.70" y="8.68" width="4.32" height="1" fill="#9a9a9a"/><rect x="9.82" y="8.68" width="4.32" height="1" fill="#9a9a9a"/><rect x="17.94" y="8.68" width="4.32" height="1" fill="#9a9a9a"/><rect x="26.06" y="8.68" width="4.32" height="1" fill="#9a9a9a"/><rect x="34.18" y="8.68" width="4.32" height="1" fill="#9a9a9a"/><rect x="1.70" y="14.80" width="4.32" height="1" fill="#9a9a9a"/><rect x="9.82" y="14.80" width="4.32" height="1" fill="#9a9a9a"/><rect x="17.94" y="14.80" width="4.32" height="1" fill="#9a9a9a"/><rect x="26.06" y="14.80" width="4.32" height="1" fill="#9a9a9a"/><rect x="34.18" y="14.80" width="4.32" height="1" fill="#9a9a9a"/><rect x="1.70" y="20.92" width="4.32" height="1" fill="#9a9a9a"/><rect x="9.82" y="20.92" width="4.32" height="1" fill="#9a9a9a"/><rect x="17.94" y="20.92" width="4.32" height="1" fill="#9a9a9a"/><rect x="26.06" y="20.92" width="4.32" height="1" fill="#9a9a9a"/><rect x="34.18" y="20.92" width="4.32" height="1" fill="#9a9a9a"/><rect x="1.70" y="27.04" width="4.32" height="1" fill="#9a9a9a"/><rect x="9.82" y="27.04" width="4.32" height="1" fill="#9a9a9a"/><rect x="17.94" y="27.04" width="4.32" height="1" fill="#9a9a9a"/><rect x="26.06" y="27.04" width="4.32" height="1" fill="#9a9a9a"/><rect x="34.18" y="27.04" width="4.32" height="1" fill="#9a9a9a"/></svg>
<svg class="b" style="left:846.9px;top:64.4px;overflow:visible" width="40.6" height="30.6" viewBox="0 0 40.6 30.6"><rect x="0" y="0.00" width="40.6" height="6.12" fill="#0f9ed5"/><rect x="0" y="6.12" width="40.6" height="6.12" fill="#caeefb"/><rect x="0" y="12.24" width="40.6" height="6.12" fill="#fff"/><rect x="0" y="18.36" width="40.6" height="6.12" fill="#caeefb"/><rect x="0" y="24.48" width="40.6" height="6.12" fill="#fff"/><path d="M0 6.12h40.6" stroke="#94dcf8" stroke-width=".5"/><path d="M0 12.24h40.6" stroke="#94dcf8" stroke-width=".5"/><path d="M0 18.36h40.6" stroke="#94dcf8" stroke-width=".5"/><path d="M0 24.48h40.6" stroke="#94dcf8" stroke-width=".5"/><rect x=".25" y=".25" width="40.1" height="30.1" fill="none" stroke="#94dcf8" stroke-width=".5"/><rect x="1.70" y="2.56" width="4.32" height="1" fill="rgba(255,255,255,.45)"/><rect x="9.82" y="2.56" width="4.32" height="1" fill="rgba(255,255,255,.45)"/><rect x="17.94" y="2.56" width="4.32" height="1" fill="rgba(255,255,255,.45)"/><rect x="26.06" y="2.56" width="4.32" height="1" fill="rgba(255,255,255,.45)"/><rect x="34.18" y="2.56" width="4.32" height="1" fill="rgba(255,255,255,.45)"/><rect x="1.70" y="8.68" width="4.32" height="1" fill="#9a9a9a"/><rect x="9.82" y="8.68" width="4.32" height="1" fill="#9a9a9a"/><rect x="17.94" y="8.68" width="4.32" height="1" fill="#9a9a9a"/><rect x="26.06" y="8.68" width="4.32" height="1" fill="#9a9a9a"/><rect x="34.18" y="8.68" width="4.32" height="1" fill="#9a9a9a"/><rect x="1.70" y="14.80" width="4.32" height="1" fill="#9a9a9a"/><rect x="9.82" y="14.80" width="4.32" height="1" fill="#9a9a9a"/><rect x="17.94" y="14.80" width="4.32" height="1" fill="#9a9a9a"/><rect x="26.06" y="14.80" width="4.32" height="1" fill="#9a9a9a"/><rect x="34.18" y="14.80" width="4.32" height="1" fill="#9a9a9a"/><rect x="1.70" y="20.92" width="4.32" height="1" fill="#9a9a9a"/><rect x="9.82" y="20.92" width="4.32" height="1" fill="#9a9a9a"/><rect x="17.94" y="20.92" width="4.32" height="1" fill="#9a9a9a"/><rect x="26.06" y="20.92" width="4.32" height="1" fill="#9a9a9a"/><rect x="34.18" y="20.92" width="4.32" height="1" fill="#9a9a9a"/><rect x="1.70" y="27.04" width="4.32" height="1" fill="#9a9a9a"/><rect x="9.82" y="27.04" width="4.32" height="1" fill="#9a9a9a"/><rect x="17.94" y="27.04" width="4.32" height="1" fill="#9a9a9a"/><rect x="26.06" y="27.04" width="4.32" height="1" fill="#9a9a9a"/><rect x="34.18" y="27.04" width="4.32" height="1" fill="#9a9a9a"/></svg>
<svg class="b" style="left:892.6px;top:64.4px;overflow:visible" width="40.6" height="30.6" viewBox="0 0 40.6 30.6"><rect x="0" y="0.00" width="40.6" height="6.12" fill="#a02b93"/><rect x="0" y="6.12" width="40.6" height="6.12" fill="#f2ceef"/><rect x="0" y="12.24" width="40.6" height="6.12" fill="#fff"/><rect x="0" y="18.36" width="40.6" height="6.12" fill="#f2ceef"/><rect x="0" y="24.48" width="40.6" height="6.12" fill="#fff"/><path d="M0 6.12h40.6" stroke="#e59edd" stroke-width=".5"/><path d="M0 12.24h40.6" stroke="#e59edd" stroke-width=".5"/><path d="M0 18.36h40.6" stroke="#e59edd" stroke-width=".5"/><path d="M0 24.48h40.6" stroke="#e59edd" stroke-width=".5"/><rect x=".25" y=".25" width="40.1" height="30.1" fill="none" stroke="#e59edd" stroke-width=".5"/><rect x="1.70" y="2.56" width="4.32" height="1" fill="rgba(255,255,255,.45)"/><rect x="9.82" y="2.56" width="4.32" height="1" fill="rgba(255,255,255,.45)"/><rect x="17.94" y="2.56" width="4.32" height="1" fill="rgba(255,255,255,.45)"/><rect x="26.06" y="2.56" width="4.32" height="1" fill="rgba(255,255,255,.45)"/><rect x="34.18" y="2.56" width="4.32" height="1" fill="rgba(255,255,255,.45)"/><rect x="1.70" y="8.68" width="4.32" height="1" fill="#9a9a9a"/><rect x="9.82" y="8.68" width="4.32" height="1" fill="#9a9a9a"/><rect x="17.94" y="8.68" width="4.32" height="1" fill="#9a9a9a"/><rect x="26.06" y="8.68" width="4.32" height="1" fill="#9a9a9a"/><rect x="34.18" y="8.68" width="4.32" height="1" fill="#9a9a9a"/><rect x="1.70" y="14.80" width="4.32" height="1" fill="#9a9a9a"/><rect x="9.82" y="14.80" width="4.32" height="1" fill="#9a9a9a"/><rect x="17.94" y="14.80" width="4.32" height="1" fill="#9a9a9a"/><rect x="26.06" y="14.80" width="4.32" height="1" fill="#9a9a9a"/><rect x="34.18" y="14.80" width="4.32" height="1" fill="#9a9a9a"/><rect x="1.70" y="20.92" width="4.32" height="1" fill="#9a9a9a"/><rect x="9.82" y="20.92" width="4.32" height="1" fill="#9a9a9a"/><rect x="17.94" y="20.92" width="4.32" height="1" fill="#9a9a9a"/><rect x="26.06" y="20.92" width="4.32" height="1" fill="#9a9a9a"/><rect x="34.18" y="20.92" width="4.32" height="1" fill="#9a9a9a"/><rect x="1.70" y="27.04" width="4.32" height="1" fill="#9a9a9a"/><rect x="9.82" y="27.04" width="4.32" height="1" fill="#9a9a9a"/><rect x="17.94" y="27.04" width="4.32" height="1" fill="#9a9a9a"/><rect x="26.06" y="27.04" width="4.32" height="1" fill="#9a9a9a"/><rect x="34.18" y="27.04" width="4.32" height="1" fill="#9a9a9a"/></svg>
<div class="b" style="left:936.300px;top:60.2px;width:10px;height:14px;border:1px solid #7a7a7a;border-right-color:#b5b5b5;border-radius:0 4px 0 0;box-sizing:border-box;background:#fff"></div>
<div class="b" style="left:936.300px;top:73.4px;width:10px;height:13.4px;border:1px solid #7a7a7a;border-right-color:#b5b5b5;border-radius:0;box-sizing:border-box;background:#fff"></div>
<div class="b" style="left:936.300px;top:86px;width:10px;height:13.8px;border:1px solid #7a7a7a;border-right-color:#b5b5b5;border-radius:0 0 4px 0;box-sizing:border-box;background:#fff"></div>
<svg class="b" style="left:939px;top:64.5px;" width="5" height="4" viewBox="0 0 5 4"><path d="M.5 3L2.500 1L4.500 3" fill="none" stroke="#333" stroke-width=".8"/></svg>
<svg class="b" style="left:939px;top:78px;" width="5" height="4" viewBox="0 0 5 4"><path d="M.5 1L2.500 3L4.500 1" fill="none" stroke="#333" stroke-width=".8"/></svg>
<svg class="b" style="left:939px;top:90px;" width="5" height="6" viewBox="0 0 5 6"><path d="M.5 .6h4" stroke="#333" stroke-width=".7"/><path d="M.5 2.200L2.500 4.200L4.500 2.200" fill="none" stroke="#333" stroke-width=".8"/></svg>
<span class="t" style="left:764.17px;top:108.00px;font-size:7.4px;color:#444;transform:scaleX(0.8739)">Table Styles</span>
<div class="b" style="left:953.4px;top:55.6px;width:0.8px;height:59px;background:#d8d8d8"></div>
<svg class="b" style="left:1260.5px;top:106.5px;" width="7" height="5" viewBox="0 0 7 5"><path d="M.5 .8L3.500 3.800L6.500 .8" fill="none" stroke="#333" stroke-width=".9"/></svg>
<div class="b" style="left:6px;top:124.500px;width:222.300px;height:31.300px;background:#fff;border-radius:3px"></div>
<span class="t ct" style="left:7.90px;top:132.00px;font-size:20px;color:#222;transform:scaleX(0.9787)">A1</span>
<svg class="b" style="left:219px;top:138px;" width="7" height="5" viewBox="0 0 7 5"><path d="M.5 .8L3.500 3.800L6.500 .8" fill="none" stroke="#444" stroke-width=".9"/></svg>
<div class="b" style="left:235px;top:137px;width:1.1px;height:1.1px;background:#555"></div>
<div class="b" style="left:235px;top:139.5px;width:1.1px;height:1.1px;background:#555"></div>
<div class="b" style="left:235px;top:142px;width:1.1px;height:1.1px;background:#555"></div>
<div class="b" style="left:243px;top:124.500px;width:55.300px;height:31.300px;background:#fff;border-radius:3px"></div>
<svg class="b" style="left:246.5px;top:136.2px;" width="9" height="9" viewBox="0 0 9 9"><path d="M.5 .5l7.800 7.800M8.300 .5L.5 8.300" stroke="#c2c2c2" stroke-width=".8"/></svg>
<svg class="b" style="left:261px;top:136px;" width="11" height="9" viewBox="0 0 11 9"><path d="M.5 5l3.300 3.300L10.500 .8" fill="none" stroke="#c2c2c2" stroke-width=".8"/></svg>
<span class="t" style="left:278.300px;top:132.500px;font-size:12.500px;color:#222;font-weight:bold;font-family:'Liberation Serif',serif;font-style:italic;transform:scaleX(.85)">f</span>
<span class="t" style="left:282.300px;top:136.500px;font-size:9px;color:#222;font-weight:bold;font-family:'Liberation Serif',serif;font-style:italic">x</span>
<svg class="b" style="left:290.8px;top:138.3px;" width="7" height="4.5" viewBox="0 0 7 4.5"><path d="M.4 .6L3.400 3.600L6.400 .6" fill="none" stroke="#555" stroke-width=".7"/></svg>
<div class="b" style="left:302px;top:124.500px;width:970.500px;height:31.300px;background:#fff;border-radius:3px"></div>
<span class="t ct" style="left:312.20px;top:131.00px;font-size:20px;color:#222;transform:scaleX(1.0072)">Weekday</span>
<svg class="b" style="left:1265px;top:138px;" width="7" height="5" viewBox="0 0 7 5"><path d="M.5 .8L3.500 3.800L6.500 .8" fill="none" stroke="#444" stroke-width=".9"/></svg>
<div class="b" style="left:41.3px;top:191.3px;width:780.0px;height:492.40000000000003px;background:#fff"></div>
<svg class="b" style="left:12px;top:162px;" width="29" height="28.5" viewBox="0 0 29 28.5"><path d="M28.500 1L28.500 27.800L1 27.800z" fill="#dfdfdf"/></svg>
<span class="t" style="left:92.22px;top:167.00px;font-size:20px;color:#444;transform:scaleX(0.9300)">A</span>
<span class="t" style="left:200.59px;top:167.00px;font-size:20px;color:#444;transform:scaleX(0.9300)">B</span>
<div class="b" style="left:155.1px;top:165px;width:0.8px;height:26.3px;background:#e2e2e2"></div>
<span class="t" style="left:361.71px;top:167.00px;font-size:20px;color:#444;transform:scaleX(0.9300)">C</span>
<div class="b" style="left:258.20000000000005px;top:165px;width:0.8px;height:26.3px;background:#e2e2e2"></div>
<span class="t" style="left:552.88px;top:167.00px;font-size:20px;color:#444;transform:scaleX(0.9300)">D</span>
<div class="b" style="left:478.1px;top:165px;width:0.8px;height:26.3px;background:#e2e2e2"></div>
<span class="t" style="left:685.34px;top:167.00px;font-size:20px;color:#444;transform:scaleX(0.9300)">E</span>
<div class="b" style="left:640.9px;top:165px;width:0.8px;height:26.3px;background:#e2e2e2"></div>
<span class="t" style="left:787.25px;top:167.00px;font-size:20px;color:#444;transform:scaleX(0.9300)">F</span>
<div class="b" style="left:742.1px;top:165px;width:0.8px;height:26.3px;background:#e2e2e2"></div>
<div class="b" style="left:41.3px;top:191.3px;width:600.0px;height:30.3px;background:#156082"></div>
<div class="b" style="left:41.3px;top:221.60000000000002px;width:600.0px;height:30.3px;background:#c0e6f5"></div>
<div class="b" style="left:41.3px;top:282.20000000000005px;width:600.0px;height:30.3px;background:#c0e6f5"></div>
<div class="b" style="left:41.3px;top:342.8px;width:600.0px;height:30.3px;background:#c0e6f5"></div>
<div class="b" style="left:41.3px;top:403.4px;width:600.0px;height:30.3px;background:#c0e6f5"></div>
<div class="b" style="left:41.3px;top:464.0px;width:600.0px;height:30.3px;background:#c0e6f5"></div>
<div class="b" style="left:41.3px;top:524.6px;width:600.0px;height:30.3px;background:#c0e6f5"></div>
<div class="b" style="left:41.3px;top:585.2px;width:600.0px;height:30.3px;background:#c0e6f5"></div>
<div class="b" style="left:41.3px;top:645.8px;width:600.0px;height:30.3px;background:#c0e6f5"></div>
<div class="b" style="left:641.3px;top:221.20000000000002px;width:180.0px;height:0.8px;background:#f0f0f0"></div>
<div class="b" style="left:41.3px;top:221.20000000000002px;width:600.0px;height:0.8px;background:#a6dcf2"></div>
<div class="b" style="left:641.3px;top:251.5px;width:180.0px;height:0.8px;background:#f0f0f0"></div>
<div class="b" style="left:41.3px;top:251.5px;width:600.0px;height:0.8px;background:#a6dcf2"></div>
<div class="b" style="left:641.3px;top:281.80000000000007px;width:180.0px;height:0.8px;background:#f0f0f0"></div>
<div class="b" style="left:41.3px;top:281.80000000000007px;width:600.0px;height:0.8px;background:#a6dcf2"></div>
<div class="b" style="left:641.3px;top:312.1px;width:180.0px;height:0.8px;background:#f0f0f0"></div>
<div class="b" style="left:41.3px;top:312.1px;width:600.0px;height:0.8px;background:#a6dcf2"></div>
<div class="b" style="left:641.3px;top:342.40000000000003px;width:180.0px;height:0.8px;background:#f0f0f0"></div>
<div class="b" style="left:41.3px;top:342.40000000000003px;width:600.0px;height:0.8px;background:#a6dcf2"></div>
<div class="b" style="left:641.3px;top:372.70000000000005px;width:180.0px;height:0.8px;background:#f0f0f0"></div>
<div class="b" style="left:41.3px;top:372.70000000000005px;width:600.0px;height:0.8px;background:#a6dcf2"></div>
<div class="b" style="left:641.3px;top:403.0px;width:180.0px;height:0.8px;background:#f0f0f0"></div>
<div class="b" style="left:41.3px;top:403.0px;width:600.0px;height:0.8px;background:#a6dcf2"></div>
<div class="b" style="left:641.3px;top:433.30000000000007px;width:180.0px;height:0.8px;background:#f0f0f0"></div>
<div class="b" style="left:41.3px;top:433.30000000000007px;width:600.0px;height:0.8px;background:#a6dcf2"></div>
<div class="b" style="left:641.3px;top:463.6px;width:180.0px;height:0.8px;background:#f0f0f0"></div>
<div class="b" style="left:41.3px;top:463.6px;width:600.0px;height:0.8px;background:#a6dcf2"></div>
<div class="b" style="left:641.3px;top:493.90000000000003px;width:180.0px;height:0.8px;background:#f0f0f0"></div>
<div class="b" style="left:41.3px;top:493.90000000000003px;width:600.0px;height:0.8px;background:#a6dcf2"></div>
<div class="b" style="left:641.3px;top:524.2px;width:180.0px;height:0.8px;background:#f0f0f0"></div>
<div class="b" style="left:41.3px;top:524.2px;width:600.0px;height:0.8px;background:#a6dcf2"></div>
<div class="b" style="left:641.3px;top:554.5000000000001px;width:180.0px;height:0.8px;background:#f0f0f0"></div>
<div class="b" style="left:41.3px;top:554.5000000000001px;width:600.0px;height:0.8px;background:#a6dcf2"></div>
<div class="b" style="left:641.3px;top:584.8000000000001px;width:180.0px;height:0.8px;background:#f0f0f0"></div>
<div class="b" style="left:41.3px;top:584.8000000000001px;width:600.0px;height:0.8px;background:#a6dcf2"></div>
<div class="b" style="left:641.3px;top:615.1px;width:180.0px;height:0.8px;background:#f0f0f0"></div>
<div class="b" style="left:41.3px;top:615.1px;width:600.0px;height:0.8px;background:#a6dcf2"></div>
<div class="b" style="left:641.3px;top:645.4px;width:180.0px;height:0.8px;background:#f0f0f0"></div>
<div class="b" style="left:41.3px;top:645.4px;width:600.0px;height:0.8px;background:#a6dcf2"></div>
<div class="b" style="left:641.3px;top:675.7px;width:180.0px;height:0.8px;background:#f0f0f0"></div>
<div class="b" style="left:41.3px;top:675.7px;width:600.0px;height:0.8px;background:#a6dcf2"></div>
<div class="b" style="left:155.1px;top:221.60000000000002px;width:0.8px;height:462.1px;background:rgba(0,0,0,.045)"></div>
<div class="b" style="left:258.20000000000005px;top:221.60000000000002px;width:0.8px;height:462.1px;background:rgba(0,0,0,.045)"></div>
<div class="b" style="left:478.1px;top:221.60000000000002px;width:0.8px;height:462.1px;background:rgba(0,0,0,.045)"></div>
<div class="b" style="left:640.9px;top:191.3px;width:0.8px;height:492.40000000000003px;background:#a6dcf2"></div>
<div class="b" style="left:742.1px;top:191.3px;width:0.8px;height:492.40000000000003px;background:#f0f0f0"></div>
<div class="b" style="left:14px;top:221.20000000000002px;width:27px;height:0.8px;background:#e9e9e9"></div>
<div class="b" style="left:14px;top:251.5px;width:27px;height:0.8px;background:#e9e9e9"></div>
<div class="b" style="left:14px;top:281.80000000000007px;width:27px;height:0.8px;background:#e9e9e9"></div>
<div class="b" style="left:14px;top:312.1px;width:27px;height:0.8px;background:#e9e9e9"></div>
<div class="b" style="left:14px;top:342.40000000000003px;width:27px;height:0.8px;background:#e9e9e9"></div>
<div class="b" style="left:14px;top:372.70000000000005px;width:27px;height:0.8px;background:#e9e9e9"></div>
<div class="b" style="left:14px;top:403.0px;width:27px;height:0.8px;background:#e9e9e9"></div>
<div class="b" style="left:14px;top:433.30000000000007px;width:27px;height:0.8px;background:#e9e9e9"></div>
<div class="b" style="left:14px;top:463.6px;width:27px;height:0.8px;background:#e9e9e9"></div>
<div class="b" style="left:14px;top:493.90000000000003px;width:27px;height:0.8px;background:#e9e9e9"></div>
<div class="b" style="left:14px;top:524.2px;width:27px;height:0.8px;background:#e9e9e9"></div>
<div class="b" style="left:14px;top:554.5000000000001px;width:27px;height:0.8px;background:#e9e9e9"></div>
<div class="b" style="left:14px;top:584.8000000000001px;width:27px;height:0.8px;background:#e9e9e9"></div>
<div class="b" style="left:14px;top:615.1px;width:27px;height:0.8px;background:#e9e9e9"></div>
<div class="b" style="left:14px;top:645.4px;width:27px;height:0.8px;background:#e9e9e9"></div>
<div class="b" style="left:14px;top:675.7px;width:27px;height:0.8px;background:#e9e9e9"></div>
<span class="t" style="left:15.24px;top:198.00px;font-size:20px;color:#444;transform:scaleX(0.9500)">1</span>
<span class="t" style="left:15.53px;top:228.00px;font-size:20px;color:#444;transform:scaleX(0.9500)">2</span>
<span class="t" style="left:15.53px;top:258.00px;font-size:20px;color:#444;transform:scaleX(0.9500)">3</span>
<span class="t" style="left:15.62px;top:289.00px;font-size:20px;color:#444;transform:scaleX(0.9500)">4</span>
<span class="t" style="left:15.53px;top:319.00px;font-size:20px;color:#444;transform:scaleX(0.9500)">5</span>
<span class="t" style="left:15.43px;top:349.00px;font-size:20px;color:#444;transform:scaleX(0.9500)">6</span>
<span class="t" style="left:15.53px;top:379.00px;font-size:20px;color:#444;transform:scaleX(0.9500)">7</span>
<span class="t" style="left:15.48px;top:410.00px;font-size:20px;color:#444;transform:scaleX(0.9500)">8</span>
<span class="t" style="left:15.53px;top:440.00px;font-size:20px;color:#444;transform:scaleX(0.9500)">9</span>
<span class="t" style="left:9.88px;top:470.00px;font-size:20px;color:#444;transform:scaleX(0.9500)">10</span>
<span class="t" style="left:10.68px;top:501.00px;font-size:20px;color:#444;transform:scaleX(0.9500)">11</span>
<span class="t" style="left:10.02px;top:531.00px;font-size:20px;color:#444;transform:scaleX(0.9500)">12</span>
<span class="t" style="left:9.92px;top:561.00px;font-size:20px;color:#444;transform:scaleX(0.9500)">13</span>
<span class="t" style="left:9.83px;top:592.00px;font-size:20px;color:#444;transform:scaleX(0.9500)">14</span>
<span class="t" style="left:9.92px;top:622.00px;font-size:20px;color:#444;transform:scaleX(0.9500)">15</span>
<span class="t" style="left:9.92px;top:652.00px;font-size:20px;color:#444;transform:scaleX(0.9500)">16</span>
<span class="t" style="left:44.70px;top:197.00px;font-size:20px;color:#fff;transform:scaleX(1.0058);font-weight:bold">Weekday</span>
<span class="t" style="left:158.25px;top:197.00px;font-size:20px;color:#fff;transform:scaleX(1.0363);font-weight:bold">Date</span>
<span class="t" style="left:260.92px;top:197.00px;font-size:20px;color:#fff;transform:scaleX(0.9852);font-weight:bold">Expenditure category</span>
<span class="t" style="left:481.02px;top:197.00px;font-size:20px;color:#fff;transform:scaleX(0.9883);font-weight:bold">Budget amount</span>
<div class="b" style="left:143.9px;top:210px;width:11px;height:10.9px;background:#fff"></div>
<svg class="b" style="left:147.1px;top:214px;" width="4.6" height="3" viewBox="0 0 4.6 3"><path d="M.1 .1h4.400L2.300 2.800z" fill="#6a6a6a"/></svg>
<div class="b" style="left:247.4px;top:210px;width:11px;height:10.9px;background:#fff"></div>
<svg class="b" style="left:250.6px;top:214px;" width="4.6" height="3" viewBox="0 0 4.6 3"><path d="M.1 .1h4.400L2.300 2.800z" fill="#6a6a6a"/></svg>
<div class="b" style="left:467.4px;top:210px;width:11px;height:10.9px;background:#fff"></div>
<svg class="b" style="left:470.59999999999997px;top:214px;" width="4.6" height="3" viewBox="0 0 4.6 3"><path d="M.1 .1h4.400L2.300 2.800z" fill="#6a6a6a"/></svg>
<div class="b" style="left:629.7px;top:210px;width:11px;height:10.9px;background:#fff"></div>
<svg class="b" style="left:632.9000000000001px;top:214px;" width="4.6" height="3" viewBox="0 0 4.6 3"><path d="M.1 .1h4.400L2.300 2.800z" fill="#6a6a6a"/></svg>
<span class="t ct" style="left:43.76px;top:228.00px;font-size:20px;color:#000;transform:scaleX(1.0244)">Monday</span>
<span class="t ct" style="left:158.41px;top:228.00px;font-size:20px;color:#000;transform:scaleX(1.0881)">2/19/2024</span>
<span class="t ct" style="left:260.94px;top:228.00px;font-size:20px;color:#000;transform:scaleX(1.0371)">Flights</span>
<span class="t ct" style="left:602.74px;top:228.00px;font-size:20px;color:#000;transform:scaleX(1.0600)">700</span>
<span class="t ct" style="left:43.76px;top:258.00px;font-size:20px;color:#000;transform:scaleX(1.0244)">Monday</span>
<span class="t ct" style="left:158.41px;top:258.00px;font-size:20px;color:#000;transform:scaleX(1.0881)">2/19/2024</span>
<span class="t ct" style="left:261.58px;top:258.00px;font-size:20px;color:#000;transform:scaleX(1.0466)">Transportation</span>
<span class="t ct" style="left:602.74px;top:258.00px;font-size:20px;color:#000;transform:scaleX(1.0600)">150</span>
<span class="t ct" style="left:43.76px;top:289.00px;font-size:20px;color:#000;transform:scaleX(1.0244)">Monday</span>
<span class="t ct" style="left:158.41px;top:289.00px;font-size:20px;color:#000;transform:scaleX(1.0881)">2/19/2024</span>
<span class="t ct" style="left:260.94px;top:289.00px;font-size:20px;color:#000;transform:scaleX(1.0375)">Food</span>
<span class="t ct" style="left:602.74px;top:289.00px;font-size:20px;color:#000;transform:scaleX(1.0600)">120</span>
<span class="t ct" style="left:43.76px;top:319.00px;font-size:20px;color:#000;transform:scaleX(1.0244)">Monday</span>
<span class="t ct" style="left:158.41px;top:319.00px;font-size:20px;color:#000;transform:scaleX(1.0881)">2/19/2024</span>
<span class="t ct" style="left:260.95px;top:319.00px;font-size:20px;color:#000;transform:scaleX(1.0322)">Lodging</span>
<span class="t ct" style="left:602.74px;top:319.00px;font-size:20px;color:#000;transform:scaleX(1.0600)">250</span>
<span class="t ct" style="left:43.76px;top:349.00px;font-size:20px;color:#000;transform:scaleX(1.0244)">Monday</span>
<span class="t ct" style="left:158.41px;top:349.00px;font-size:20px;color:#000;transform:scaleX(1.0881)">2/19/2024</span>
<span class="t ct" style="left:260.92px;top:349.00px;font-size:20px;color:#000;transform:scaleX(1.0489)">Entertainment</span>
<span class="t ct" style="left:602.74px;top:349.00px;font-size:20px;color:#000;transform:scaleX(1.0600)">160</span>
<span class="t ct" style="left:43.76px;top:379.00px;font-size:20px;color:#000;transform:scaleX(1.0244)">Monday</span>
<span class="t ct" style="left:158.41px;top:379.00px;font-size:20px;color:#000;transform:scaleX(1.0881)">2/19/2024</span>
<span class="t ct" style="left:260.85px;top:379.00px;font-size:20px;color:#000;transform:scaleX(1.0926)">Misc.</span>
<span class="t ct" style="left:614.51px;top:379.00px;font-size:20px;color:#000;transform:scaleX(1.0600)">10</span>
<span class="t ct" style="left:43.80px;top:410.00px;font-size:20px;color:#000;transform:scaleX(0.9987)">Tuesday</span>
<span class="t ct" style="left:158.41px;top:410.00px;font-size:20px;color:#000;transform:scaleX(1.0881)">2/20/2024</span>
<span class="t ct" style="left:261.58px;top:410.00px;font-size:20px;color:#000;transform:scaleX(1.0466)">Transportation</span>
<span class="t ct" style="left:602.74px;top:410.00px;font-size:20px;color:#000;transform:scaleX(1.0600)">150</span>
<span class="t ct" style="left:43.80px;top:440.00px;font-size:20px;color:#000;transform:scaleX(0.9987)">Tuesday</span>
<span class="t ct" style="left:158.41px;top:440.00px;font-size:20px;color:#000;transform:scaleX(1.0881)">2/20/2024</span>
<span class="t ct" style="left:260.94px;top:440.00px;font-size:20px;color:#000;transform:scaleX(1.0375)">Food</span>
<span class="t ct" style="left:602.74px;top:440.00px;font-size:20px;color:#000;transform:scaleX(1.0600)">120</span>
<span class="t ct" style="left:43.80px;top:470.00px;font-size:20px;color:#000;transform:scaleX(0.9987)">Tuesday</span>
<span class="t ct" style="left:158.41px;top:470.00px;font-size:20px;color:#000;transform:scaleX(1.0881)">2/20/2024</span>
<span class="t ct" style="left:260.95px;top:470.00px;font-size:20px;color:#000;transform:scaleX(1.0322)">Lodging</span>
<span class="t ct" style="left:602.74px;top:470.00px;font-size:20px;color:#000;transform:scaleX(1.0600)">250</span>
<span class="t ct" style="left:43.80px;top:501.00px;font-size:20px;color:#000;transform:scaleX(0.9987)">Tuesday</span>
<span class="t ct" style="left:158.41px;top:501.00px;font-size:20px;color:#000;transform:scaleX(1.0881)">2/20/2024</span>
<span class="t ct" style="left:260.92px;top:501.00px;font-size:20px;color:#000;transform:scaleX(1.0489)">Entertainment</span>
<span class="t ct" style="left:602.74px;top:501.00px;font-size:20px;color:#000;transform:scaleX(1.0600)">160</span>
<span class="t ct" style="left:43.80px;top:531.00px;font-size:20px;color:#000;transform:scaleX(0.9987)">Tuesday</span>
<span class="t ct" style="left:158.41px;top:531.00px;font-size:20px;color:#000;transform:scaleX(1.0881)">2/20/2024</span>
<span class="t ct" style="left:260.85px;top:531.00px;font-size:20px;color:#000;transform:scaleX(1.0926)">Misc.</span>
<span class="t ct" style="left:614.51px;top:531.00px;font-size:20px;color:#000;transform:scaleX(1.0600)">10</span>
<span class="t ct" style="left:44.40px;top:561.00px;font-size:20px;color:#000;transform:scaleX(1.0133)">Wednesday</span>
<span class="t ct" style="left:158.41px;top:561.00px;font-size:20px;color:#000;transform:scaleX(1.0881)">2/21/2024</span>
<span class="t ct" style="left:261.58px;top:561.00px;font-size:20px;color:#000;transform:scaleX(1.0466)">Transportation</span>
<span class="t ct" style="left:602.74px;top:561.00px;font-size:20px;color:#000;transform:scaleX(1.0600)">150</span>
<span class="t ct" style="left:44.40px;top:592.00px;font-size:20px;color:#000;transform:scaleX(1.0133)">Wednesday</span>
<span class="t ct" style="left:158.41px;top:592.00px;font-size:20px;color:#000;transform:scaleX(1.0881)">2/21/2024</span>
<span class="t ct" style="left:260.94px;top:592.00px;font-size:20px;color:#000;transform:scaleX(1.0375)">Food</span>
<span class="t ct" style="left:602.74px;top:592.00px;font-size:20px;color:#000;transform:scaleX(1.0600)">120</span>
<span class="t ct" style="left:44.40px;top:622.00px;font-size:20px;color:#000;transform:scaleX(1.0133)">Wednesday</span>
<span class="t ct" style="left:158.41px;top:622.00px;font-size:20px;color:#000;transform:scaleX(1.0881)">2/21/2024</span>
<span class="t ct" style="left:260.95px;top:622.00px;font-size:20px;color:#000;transform:scaleX(1.0322)">Lodging</span>
<span class="t ct" style="left:602.74px;top:622.00px;font-size:20px;color:#000;transform:scaleX(1.0600)">250</span>
<span class="t ct" style="left:44.40px;top:652.00px;font-size:20px;color:#000;transform:scaleX(1.0133)">Wednesday</span>
<span class="t ct" style="left:158.41px;top:652.00px;font-size:20px;color:#000;transform:scaleX(1.0881)">2/21/2024</span>
<span class="t ct" style="left:260.92px;top:652.00px;font-size:20px;color:#000;transform:scaleX(1.0489)">Entertainment</span>
<span class="t ct" style="left:602.74px;top:652.00px;font-size:20px;color:#000;transform:scaleX(1.0600)">160</span>
<div class="b" style="left:822.3px;top:161.5px;width:11.1px;height:522.5px;background:#f6f6f6;border-radius:5.500px"></div>
<svg class="b" style="left:824.2px;top:164px;" width="7" height="5" viewBox="0 0 7 5"><path d="M3.500 .3L6.600 4.700H.4z" fill="#666"/></svg>
<div class="b" style="left:825px;top:172.8px;width:5.2px;height:200.2px;background:#6e6e6e;border-radius:2.600px"></div>
<svg class="b" style="left:824.5px;top:676px;" width="7" height="5" viewBox="0 0 7 5"><path d="M3.500 4.700L6.700 .3H.3z" fill="#666"/></svg>
<div class="b" style="left:0px;top:683.7px;width:834px;height:21px;background:#f0f0f0"></div>
<svg class="b" style="left:13.5px;top:690.5px;" width="5" height="7" viewBox="0 0 5 7"><path d="M4.200 .5L1 3.500L4.200 6.500" fill="none" stroke="#b8b8b8" stroke-width=".9"/></svg>
<svg class="b" style="left:35px;top:690.5px;" width="5" height="7" viewBox="0 0 5 7"><path d="M.8 .5L4 3.500L.8 6.500" fill="none" stroke="#b8b8b8" stroke-width=".9"/></svg>
<div class="b" style="left:72.500px;top:683.7px;width:86.200px;height:18.500px;background:#fff;border-radius:0 0 4px 4px"></div>
<span class="t sb" style="left:76.80px;top:689.00px;font-size:9.2px;color:#222;transform:scaleX(1.0819)">Demo trip budget</span>
<div class="b" style="left:77.5px;top:698.8px;width:75.6px;height:1.5px;background:#107c41"></div>
<div class="b" style="left:162px;top:689px;width:0.8px;height:11px;background:#d9d9d9"></div>
<span class="t" style="left:170.65px;top:690.00px;font-size:9.2px;color:#333;transform:scaleX(1.0202)">Demo bank statement</span>
<div class="b" style="left:272.5px;top:689px;width:0.8px;height:11px;background:#d9d9d9"></div>
<svg class="b" style="left:300px;top:689.8px;" width="8" height="8" viewBox="0 0 8 8"><path d="M4 .5v7M.5 4h7" stroke="#444" stroke-width=".8"/></svg>
<div class="b" style="left:502.8px;top:690.5px;width:1.2px;height:1.2px;background:#555"></div>
<div class="b" style="left:502.8px;top:693.2px;width:1.2px;height:1.2px;background:#555"></div>
<div class="b" style="left:502.8px;top:695.9px;width:1.2px;height:1.2px;background:#555"></div>
<div class="b" style="left:515px;top:688px;width:307px;height:12.5px;background:#f6f6f6;border-radius:6px"></div>
<svg class="b" style="left:517.5px;top:691px;" width="5" height="7" viewBox="0 0 5 7"><path d="M.3 3.500L4.700 .3v6.400z" fill="#555"/></svg>
<div class="b" style="left:525.6px;top:692px;width:192px;height:4.8px;background:#6e6e6e;border-radius:2.400px"></div>
<svg class="b" style="left:814px;top:691px;" width="5" height="7" viewBox="0 0 5 7"><path d="M4.700 3.500L.3 .3v6.400z" fill="#555"/></svg>
<div class="b" style="left:840.5px;top:156px;width:440px;height:549px;background:#f0f0f0"></div>
<span class="t" style="left:840.51px;top:169.00px;font-size:14.3px;color:#3b3b3b;transform:scaleX(0.9663)">Copilot for Finance (Preview)</span>
<svg class="b" style="left:1240px;top:174.5px;" width="10" height="7" viewBox="0 0 10 7"><path d="M.7 .8L5 5.400L9.300 .8" fill="none" stroke="#444" stroke-width=".9"/></svg>
<svg class="b" style="left:1262.5px;top:173.5px;" width="8" height="8" viewBox="0 0 8 8"><path d="M.6 .6l6.800 6.800M7.400 .6L.6 7.400" stroke="#444" stroke-width=".9"/></svg>
<div class="b" style="left:840px;top:190px;width:433.500px;height:507.300px;background:#fff;border:1px solid #dcdcdc;box-sizing:border-box"></div>
<div class="b" style="left:841.5px;top:191px;width:431px;height:21px;background:#f5f5f5"></div>
<div class="b" style="left:841.5px;top:212px;width:431px;height:0.8px;background:#e0e0e0"></div>
<svg class="b" style="left:857px;top:197px;" width="11" height="9" viewBox="0 0 11 9"><path d="M10.300 4.500H.9M4.600 .7L.8 4.500L4.600 8.300" fill="none" stroke="#333" stroke-width=".9"/></svg>
<div class="b" style="left:1247.2px;top:200.3px;width:2px;height:2px;background:#333;border-radius:50%"></div>
<div class="b" style="left:1250.6000000000001px;top:200.3px;width:2px;height:2px;background:#333;border-radius:50%"></div>
<div class="b" style="left:1254.0px;top:200.3px;width:2px;height:2px;background:#333;border-radius:50%"></div>
<div class="b" style="left:852px;top:221px;width:21px;height:21px;background:#ebebeb;border-radius:50%"></div>
<svg class="b" style="left:857.5px;top:226px;" width="11" height="12" viewBox="0 0 11 12"><path d="M1 2.200v6.600c0 .8 1 1.300 2.500 1.500M8 2.200v3.300" fill="none" stroke="#555" stroke-width=".9"/><ellipse cx="4.500" cy="2.200" rx="3.500" ry="1.400" fill="none" stroke="#555" stroke-width=".9"/><path d="M5 9h5.200M6.200 7.800L5 9l1.200 1.200M9 7.800L10.200 9 9 10.200" fill="none" stroke="#666" stroke-width=".7"/></svg>
<span class="t sb" style="left:877.66px;top:228.00px;font-size:9.2px;color:#2d2d2d;transform:scaleX(1.0080)">Reconcile data</span>
<svg class="b" style="left:975.5px;top:226.5px;" width="10" height="10" viewBox="0 0 10 10"><circle cx="4.700" cy="4.800" r="4.200" fill="#107c41"/></svg>
<div class="b" style="left:987.6px;top:231px;width:21px;height:0.8px;background:#d9d9d9"></div>
<div class="b" style="left:1012.7px;top:229.6px;width:3.5px;height:3.5px;background:#d4d4d4;border-radius:50%"></div>
<div class="b" style="left:1020.4px;top:231px;width:21px;height:0.8px;background:#d9d9d9"></div>
<div class="b" style="left:1045.3px;top:229.6px;width:3.5px;height:3.5px;background:#d4d4d4;border-radius:50%"></div>
<div class="b" style="left:841.5px;top:250px;width:431px;height:0.8px;background:#e0e0e0"></div>
<span class="t" style="left:851.09px;top:262.00px;font-size:9.2px;color:#333;transform:scaleX(1.0006)">Select 2 worksheets and tables to reconcile</span>
<svg class="b" style="left:1031.5px;top:261px;" width="10" height="10" viewBox="0 0 10 10"><circle cx="5" cy="5" r="4.300" fill="none" stroke="#444" stroke-width=".8"/><path d="M5 4.300v3" stroke="#444" stroke-width=".9"/><circle cx="5" cy="2.900" r=".55" fill="#444"/></svg>
<span class="t" style="left:851.45px;top:291.00px;font-size:9.2px;color:#333;transform:scaleX(0.9938)">Worksheet 1</span>
<span class="t" style="left:905.65px;top:291.00px;font-size:11.5px;color:#c4314b;transform:scaleX(0.8696)">*</span>
<svg class="b" style="left:858.9px;top:312.7px;" width="9" height="11" viewBox="0 0 9 11"><path d="M1.500 .5h4l3 3v6a1 1 0 0 1-1 1h-6a1 1 0 0 1-1-1v-8a1 1 0 0 1 1-1z" fill="#fff" stroke="#444" stroke-width=".8"/><path d="M5.500 .5v3h3" fill="none" stroke="#444" stroke-width=".8"/><rect x="2.300" y="5.300" width="4.400" height="3.400" fill="#777"/></svg>
<div class="b" style="left:873.400px;top:308.1px;width:166px;height:21px;border:1px solid #d9d9d9;border-bottom:1.200px solid #8f8f8f;border-radius:3px;box-sizing:border-box;background:#fff"></div>
<span class="t" style="left:880.72px;top:315.00px;font-size:9.2px;color:#2d2d2d;transform:scaleX(1.0561)">Demo trip budget</span>
<svg class="b" style="left:1021.5px;top:316.5px;" width="9" height="6" viewBox="0 0 9 6"><path d="M.6 .8L4.500 4.700L8.400 .8" fill="none" stroke="#555" stroke-width=".8"/></svg>
<svg class="b" style="left:863.5px;top:338px;" width="8" height="16" viewBox="0 0 8 16"><path d="M.7 0v10.200a3 3 0 0 0 3 3H6.800" fill="none" stroke="#d6d6d6" stroke-width=".8"/></svg>
<svg class="b" style="left:874.8px;top:346px;" width="10" height="10" viewBox="0 0 10 10"><rect x=".6" y=".6" width="8.800" height="8.800" rx="1.500" fill="none" stroke="#333" stroke-width=".8"/><path d="M.6 3.600h8.800M.6 6.500h8.800M3.600 .6v8.800M6.500 .6v8.800" stroke="#333" stroke-width=".7"/></svg>
<div class="b" style="left:890px;top:340.6px;width:165.700px;height:21px;border:1px solid #d9d9d9;border-bottom:1.200px solid #8f8f8f;border-radius:3px;box-sizing:border-box;background:#fff"></div>
<span class="t" style="left:898.42px;top:348.00px;font-size:9.2px;color:#2d2d2d;transform:scaleX(0.9859)">Trip_budget_table</span>
<svg class="b" style="left:1038.2px;top:349px;" width="9" height="6" viewBox="0 0 9 6"><path d="M.6 .8L4.500 4.700L8.400 .8" fill="none" stroke="#555" stroke-width=".8"/></svg>
<span class="t" style="left:851.45px;top:379.00px;font-size:9.2px;color:#333;transform:scaleX(0.9947)">Worksheet 2</span>
<span class="t" style="left:905.65px;top:378.00px;font-size:11.5px;color:#c4314b;transform:scaleX(0.8696)">*</span>
<svg class="b" style="left:858.9px;top:400.1px;" width="9" height="11" viewBox="0 0 9 11"><path d="M1.500 .5h4l3 3v6a1 1 0 0 1-1 1h-6a1 1 0 0 1-1-1v-8a1 1 0 0 1 1-1z" fill="#fff" stroke="#444" stroke-width=".8"/><path d="M5.500 .5v3h3" fill="none" stroke="#444" stroke-width=".8"/><rect x="2.300" y="5.300" width="4.400" height="3.400" fill="#777"/></svg>
<div class="b" style="left:873.400px;top:395.5px;width:166px;height:21px;border:1px solid #d9d9d9;border-bottom:1.200px solid #8f8f8f;border-radius:3px;box-sizing:border-box;background:#fff"></div>
<span class="t" style="left:880.75px;top:403.00px;font-size:9.2px;color:#2d2d2d;transform:scaleX(1.0214)">Demo bank statement</span>
<svg class="b" style="left:1021.5px;top:403.9px;" width="9" height="6" viewBox="0 0 9 6"><path d="M.6 .8L4.500 4.700L8.400 .8" fill="none" stroke="#555" stroke-width=".8"/></svg>
<svg class="b" style="left:863.5px;top:425.4px;" width="8" height="16" viewBox="0 0 8 16"><path d="M.7 0v10.200a3 3 0 0 0 3 3H6.800" fill="none" stroke="#d6d6d6" stroke-width=".8"/></svg>
<svg class="b" style="left:874.8px;top:433.4px;" width="10" height="10" viewBox="0 0 10 10"><rect x=".6" y=".6" width="8.800" height="8.800" rx="1.500" fill="none" stroke="#333" stroke-width=".8"/><path d="M.6 3.600h8.800M.6 6.500h8.800M3.600 .6v8.800M6.500 .6v8.800" stroke="#333" stroke-width=".7"/></svg>
<div class="b" style="left:890px;top:428.0px;width:165.700px;height:21px;border:1px solid #d9d9d9;border-bottom:1.200px solid #8f8f8f;border-radius:3px;box-sizing:border-box;background:#fff"></div>
<span class="t" style="left:897.88px;top:435.00px;font-size:9.2px;color:#2d2d2d;transform:scaleX(0.9846)">Bank_statement_table</span>
<svg class="b" style="left:1038.2px;top:436.4px;" width="9" height="6" viewBox="0 0 9 6"><path d="M.6 .8L4.500 4.700L8.400 .8" fill="none" stroke="#555" stroke-width=".8"/></svg>
<div class="b" style="left:841.5px;top:667px;width:431px;height:0.8px;background:#e0e0e0"></div>
<div class="b" style="left:847.800px;top:672px;width:64.200px;height:21px;border-radius:3.500px;background:#107c41"></div>
<span class="t sb" style="left:868.98px;top:679.00px;font-size:9.2px;color:#fff;transform:scaleX(1.1145)">Next</span>
<div class="b" style="left:1202.300px;top:672.200px;width:63.700px;height:20.800px;border:1px solid #d1d1d1;border-radius:3.500px;box-sizing:border-box;background:#fff"></div>
<span class="t sb" style="left:1220.34px;top:679.00px;font-size:9.2px;color:#242424;transform:scaleX(0.9944)">Cancel</span>
<div class="b" style="left:0px;top:705px;width:1280px;height:15px;background:#f3f3f3"></div>
<span class="t" style="left:7.68px;top:710.00px;font-size:7.4px;color:#444;transform:scaleX(0.8704)">Ready</span>
<svg class="b" style="left:38.5px;top:708px;" width="10" height="9" viewBox="0 0 10 9"><rect x=".5" y="1" width="9" height="7.500" fill="none" stroke="#555" stroke-width=".8"/><path d="M.5 2.800h9M2.500 .3v1.500M7.500 .3v1.500" stroke="#555" stroke-width=".8"/><circle cx="5.800" cy="5.800" r="1.800" fill="#555"/><circle cx="5.800" cy="5.800" r=".7" fill="#f3f3f3"/></svg>
<svg class="b" style="left:60px;top:707.5px;" width="9" height="10" viewBox="0 0 9 10"><circle cx="3.500" cy="1.600" r="1.100" fill="none" stroke="#444" stroke-width=".7"/><path d="M.5 3.400c2 .6 4 .6 6 0M3.500 4v2.500M3.500 6.500L2 9.500M3.500 6.500L4.600 8" fill="none" stroke="#444" stroke-width=".7"/><path d="M5 8.200l1.300 1.200L8.600 6.500" fill="none" stroke="#444" stroke-width=".8"/></svg>
<span class="t" style="left:72.70px;top:710.00px;font-size:7.4px;color:#444;transform:scaleX(0.9315)">Accessibility: Good to go</span>
<div class="b" style="left:1082px;top:705.3px;width:26.5px;height:14.7px;background:#dadada"></div>
<svg class="b" style="left:1090.5px;top:708px;" width="9" height="9" viewBox="0 0 9 9"><rect x=".5" y=".5" width="8" height="8" fill="none" stroke="#333" stroke-width=".8"/><path d="M.5 3.200h8M.5 5.800h8M3.200 .5v8M5.800 .5v8" stroke="#333" stroke-width=".7"/></svg>
<svg class="b" style="left:1117px;top:708px;" width="10" height="9" viewBox="0 0 10 9"><rect x=".5" y=".5" width="9" height="8" fill="none" stroke="#444" stroke-width=".8"/><rect x="2.800" y="2.300" width="4.400" height="4.400" fill="none" stroke="#444" stroke-width=".7"/><path d="M4.300 3.500v2M5.700 3.500v2" stroke="#444" stroke-width=".5"/></svg>
<svg class="b" style="left:1144px;top:708px;" width="10" height="9" viewBox="0 0 10 9"><rect x=".5" y=".5" width="9" height="8" fill="none" stroke="#444" stroke-width=".8"/><path d="M3.200 .5v4.300h3.600V.5" fill="none" stroke="#444" stroke-width=".7"/></svg>
<div class="b" style="left:1166px;top:712.3px;width:5px;height:0.7px;background:#8a8a8a"></div>
<div class="b" style="left:1174.8px;top:712.3px;width:66px;height:0.8px;background:#8a8a8a"></div>
<div class="b" style="left:1206.4px;top:708.8px;width:3px;height:7.4px;background:#555"></div>
<svg class="b" style="left:1244px;top:709.5px;" width="6" height="6" viewBox="0 0 6 6"><path d="M3 .3v5.400M.3 3h5.400" stroke="#777" stroke-width=".8"/></svg>
<span class="t" style="left:1258.50px;top:710.00px;font-size:7.4px;color:#444;transform:scaleX(0.8935)">100%</span>
</div>
</body></html>
